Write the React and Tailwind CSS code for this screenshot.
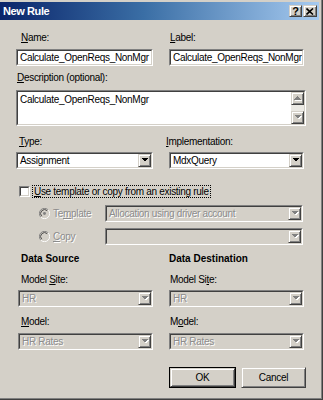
import React from "react";

const Arrow = ({ dir = "down", disabled = false }) => {
  const pts = dir === "down" ? "0,0 7,0 3.5,3.5" : "0,3.5 7,3.5 3.5,0";
  return (
    <svg width="8" height="5" viewBox="0 0 8 5" shapeRendering="crispEdges">
      {disabled && <polygon points={pts} fill="#ffffff" transform="translate(1,1)" />}
      <polygon points={pts} fill={disabled ? "#808080" : "#000000"} />
    </svg>
  );
};

const RaisedBtn = ({ children, className = "" }) => (
  <div
    className={`flex items-center justify-center bg-[#d4d0c8] border border-t-[#d4d0c8] border-l-[#d4d0c8] border-r-[#404040] border-b-[#404040] shadow-[inset_1px_1px_0_#ffffff,inset_-1px_-1px_0_#808080] ${className}`}
  >
    {children}
  </div>
);

const Sunken = ({ children, className = "", inner = "bg-white" }) => (
  <div
    className={`border border-t-[#808080] border-l-[#808080] border-r-white border-b-white ${className}`}
  >
    <div
      className={`h-full w-full flex items-stretch border border-t-[#404040] border-l-[#404040] border-r-[#d4d0c8] border-b-[#d4d0c8] ${inner}`}
    >
      {children}
    </div>
  </div>
);

const Edit = ({ value, className = "" }) => (
  <Sunken className={`h-[17px] ${className}`}>
    <div className="flex-1 min-w-0 pl-[2px] flex items-center whitespace-nowrap overflow-hidden">{value}</div>
  </Sunken>
);

const Combo = ({ value, disabled = false, className = "" }) => (
  <Sunken className={`h-[17px] ${className}`} inner={disabled ? "bg-[#d4d0c8]" : "bg-white"}>
    <div
      className={`flex-1 min-w-0 pl-[2px] flex items-center whitespace-nowrap overflow-hidden ${
        disabled ? "text-[#8c8c8c] [text-shadow:1px_1px_0_#ffffff]" : ""
      }`}
    >
      {value}
    </div>
    <RaisedBtn className="w-[13px] h-full shrink-0">
      <Arrow disabled={disabled} />
    </RaisedBtn>
  </Sunken>
);

const Radio = ({ checked }) => (
  <svg width="11" height="11" viewBox="0 0 12 12">
    <circle cx="6" cy="6" r="5.5" fill="#d4d0c8" />
    <path d="M10 2 A5.5 5.5 0 0 0 2 10" stroke="#808080" strokeWidth="1" fill="none" />
    <path d="M2 10 A5.5 5.5 0 0 0 10 2" stroke="#ffffff" strokeWidth="1" fill="none" />
    <circle cx="6" cy="6" r="4" fill="#d4d0c8" />
    <path d="M9 3 A4.2 4.2 0 0 0 3 9" stroke="#404040" strokeWidth="1" fill="none" />
    {checked && <circle cx="6" cy="6" r="1.6" fill="#808080" />}
  </svg>
);

const dis = "text-[#8c8c8c] [text-shadow:1px_1px_0_#ffffff]";

export default function App() {
  return (
    <div className="w-[323px] h-[400px] bg-[#d4d0c8] overflow-hidden text-black text-[10px] leading-[13px] tracking-[-0.3px] font-['Liberation_Sans',Arial,sans-serif]">
      <div className="w-[323px] h-[400px] border-r border-b border-r-[#404040] border-b-[#404040]">
        <div className="w-full h-full flex flex-col border-r border-b border-r-[#808080] border-b-[#808080] pt-[2px] pr-[2px]">
          {/* Title bar */}
          <div className="h-[18px] flex items-center justify-between bg-[linear-gradient(to_right,#0a246a,#3a6ea5_45%,#a6caf0)]">
            <div className="pl-[3px] text-white font-bold text-[11px] leading-[14px] tracking-[-0.4px]">New Rule</div>
            <div className="flex gap-[1px] pr-[2px]">
              <RaisedBtn className="w-[13px] h-[12px]">
                <span className="font-bold text-[11px] leading-[10px] tracking-normal">?</span>
              </RaisedBtn>
              <RaisedBtn className="w-[14px] h-[12px]">
                <svg width="8" height="7" viewBox="0 0 8 7">
                  <path d="M0.5 0.5 L7 6.5 M7 0.5 L0.5 6.5" stroke="#000" strokeWidth="1.6" />
                </svg>
              </RaisedBtn>
            </div>
          </div>

          {/* Content */}
          <div className="pl-[16px] flex flex-col">
            <div className="mt-[11px] grid grid-cols-[137px_135px] gap-x-[16px]">
              <div className="pl-[5px]"><span className="underline">N</span>ame:</div>
              <div className="pl-[1px]"><span className="underline">L</span>abel:</div>
            </div>
            <div className="mt-[5px] grid grid-cols-[137px_135px] gap-x-[16px]">
              <Edit value="Calculate_OpenReqs_NonMgr" />
              <Edit value="Calculate_OpenReqs_NonMgr" />
            </div>

            <div className="mt-[5px] pl-[1px]"><span className="underline">D</span>escription (optional):</div>
            <Sunken className="mt-[6px] w-[290px] h-[36px]">
              <div className="flex-1 pl-[2px] pt-[1px]">Calculate_OpenReqs_NonMgr</div>
              <div className="w-[13px] flex flex-col bg-[#ebe9e4]">
                <RaisedBtn className="h-[13px]"><Arrow dir="up" disabled /></RaisedBtn>
                <div className="flex-1" />
                <RaisedBtn className="h-[13px]"><Arrow dir="down" disabled /></RaisedBtn>
              </div>
            </Sunken>

            <div className="mt-[9px] grid grid-cols-[137px_135px] gap-x-[16px]">
              <div className="pl-[3px]"><span className="underline">T</span>ype:</div>
              <div className="ml-[-3px]"><span className="underline">I</span>mplementation:</div>
            </div>
            <div className="mt-[4px] grid grid-cols-[137px_135px] gap-x-[16px]">
              <Combo value="Assignment" />
              <Combo value="MdxQuery" />
            </div>

            {/* Checkbox */}
            <div className="mt-[16px] h-[13px] flex items-center">
              <div className="ml-[3px] w-[11px] h-[11px] border border-t-[#808080] border-l-[#808080] border-r-white border-b-white">
                <div className="w-full h-full bg-white border border-t-[#404040] border-l-[#404040] border-r-[#d4d0c8] border-b-[#d4d0c8]" />
              </div>
              <div className="ml-[2px] px-[1px] border border-dotted border-black leading-[11px]">
                <span className="underline">U</span>se template or copy from an existing rule
              </div>
            </div>

            {/* Template */}
            <div className="mt-[7px] h-[17px] flex items-center">
              <div className="ml-[23px] flex"><Radio checked /></div>
              <div className={`ml-[3px] w-[52px] ${dis}`}>Te<span className="underline">m</span>plate</div>
              <Combo value="Allocation using driver account" disabled className="w-[198px]" />
            </div>
            <div className="mt-[6px] h-[17px] flex items-center">
              <div className="ml-[23px] flex"><Radio /></div>
              <div className={`ml-[3px] w-[52px] ${dis}`}><span className="underline">C</span>opy</div>
              <Combo value="" disabled className="w-[198px]" />
            </div>

            {/* Data source / destination */}
            <div className="mt-[7px] grid grid-cols-[137px_135px] gap-x-[16px] font-bold tracking-normal">
              <div className="pl-[5px]">Data Source</div>
              <div>Data Destination</div>
            </div>
            <div className="mt-[8px] grid grid-cols-[137px_135px] gap-x-[16px]">
              <div className="pl-[5px]">Model <span className="underline">S</span>ite:</div>
              <div className="pl-[1px]">Model Si<span className="underline">t</span>e:</div>
            </div>
            <div className="mt-[4px] grid grid-cols-[137px_135px] gap-x-[16px]">
              <Combo value="HR" disabled className="ml-[2px] w-[135px]" />
              <Combo value="HR" disabled />
            </div>
            <div className="mt-[8px] grid grid-cols-[137px_135px] gap-x-[16px]">
              <div className="pl-[5px]"><span className="underline">M</span>odel:</div>
              <div className="pl-[1px]">M<span className="underline">o</span>del:</div>
            </div>
            <div className="mt-[5px] grid grid-cols-[137px_135px] gap-x-[16px]">
              <Combo value="HR Rates" disabled className="ml-[2px] w-[135px]" />
              <Combo value="HR Rates" disabled />
            </div>

            {/* Buttons */}
            <div className="mt-[17px] flex gap-[5px] pl-[153px]">
              <div className="w-[67px] h-[21px] border border-black">
                <RaisedBtn className="w-full h-full">OK</RaisedBtn>
              </div>
              <RaisedBtn className="w-[65px] h-[21px]">Cancel</RaisedBtn>
            </div>
          </div>
        </div>
      </div>
    </div>
  );
}
